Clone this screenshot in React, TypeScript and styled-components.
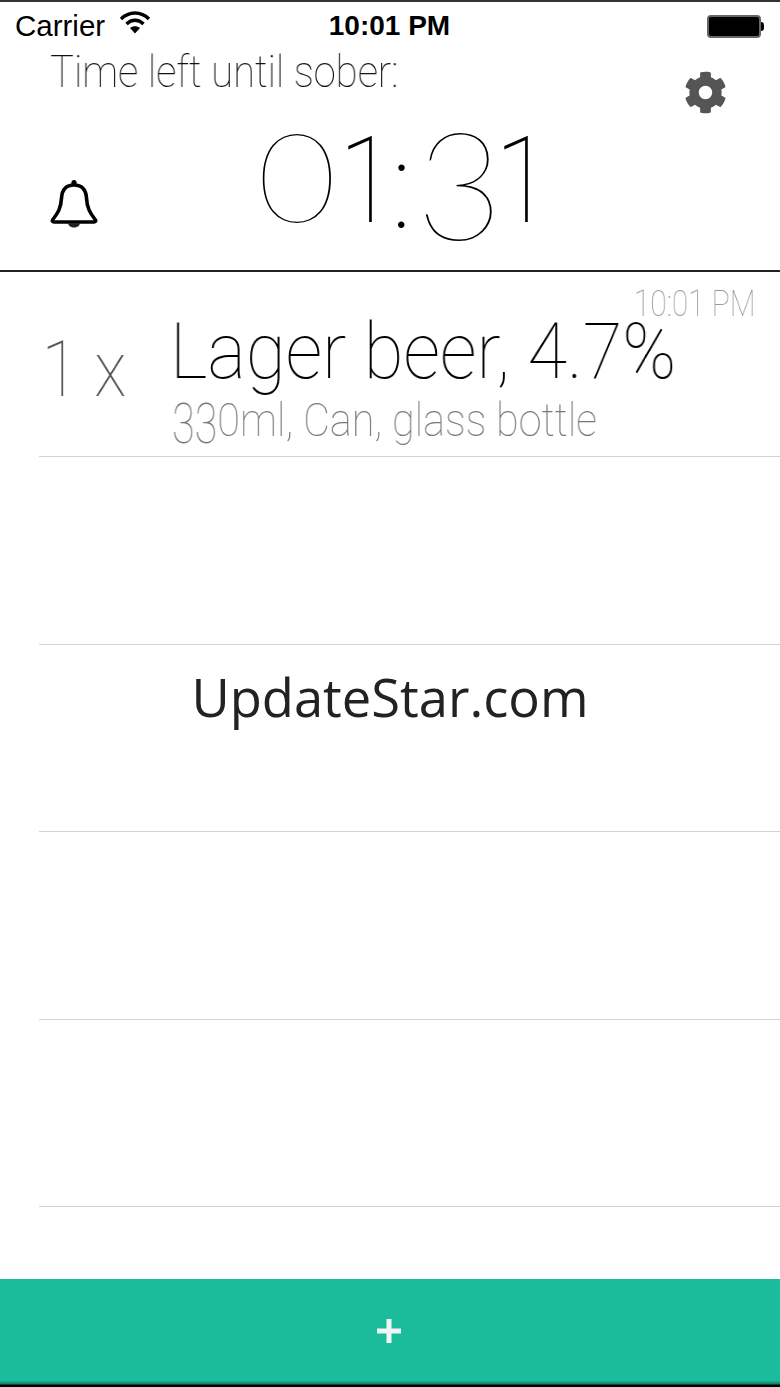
import styled, { createGlobalStyle } from 'styled-components';
import { FaCog } from 'react-icons/fa';

const GlobalStyle = createGlobalStyle`
  html, body {
    margin: 0;
    padding: 0;
    background: #fff;
  }
`;

const App = () => {
  return (
    <>
      <GlobalStyle />
      <StyledPage>
        <StyledStatusBar>
          <StyledCarrier>
            Carrier
            <svg width="32" height="24" viewBox="0 0 32 24">
              <path d="M2 9 C10 1 22 1 30 9" fill="none" stroke="#000" strokeWidth="3.4" />
              <path d="M7.5 14 C12.5 9 19.5 9 24.5 14" fill="none" stroke="#000" strokeWidth="3.4" />
              <path d="M11 18 L16 23.5 L21 18 C18 15.5 14 15.5 11 18 Z" fill="#000" />
            </svg>
          </StyledCarrier>
          <StyledClock>10:01 PM</StyledClock>
          <StyledBattery>
            <StyledBatteryBody />
            <StyledBatteryTip />
          </StyledBattery>
        </StyledStatusBar>

        <StyledSummary>
          <StyledTitleRow>
            <StyledTitle>Time left until sober:</StyledTitle>
            <StyledGear>
              <FaCog size={43} />
            </StyledGear>
          </StyledTitleRow>
          <StyledTimerRow>
            <svg width="48" height="50" viewBox="0 0 48 50">
              <path
                d="M24 6 C15 6 12 12 11.5 19 C11 29 8 34 2.5 41 C2 42 2.5 43 4 43 L44 43 C45.5 43 46 42 45.5 41 C40 34 37 29 36.500 19 C36 12 33 6 24 6 Z"
                fill="none"
                stroke="#000"
                strokeWidth="3.6"
                strokeLinejoin="round"
              />
              <circle cx="24" cy="3.500" r="2.600" fill="#000" />
              <path d="M18 44 C18.500 50 29.500 50 30 44 Z" fill="#222" />
            </svg>
            <StyledTimer>
              <StyledZero>0</StyledZero>
              <StyledOne $width={49}>1</StyledOne>
              <StyledColon>:</StyledColon>
              <StyledTimerThree>3</StyledTimerThree>
              <StyledOne $width={40}>1</StyledOne>
            </StyledTimer>
          </StyledTimerRow>
        </StyledSummary>

        <StyledList>
          <StyledRow>
            <StyledQuantity>1 x</StyledQuantity>
            <StyledDrink>
              <StyledStamp>10:01 PM</StyledStamp>
              <StyledName>Lager beer, 4.7%</StyledName>
              <StyledDetail>
                <StyledDropThree>3</StyledDropThree>
                <StyledDropThree>3</StyledDropThree>0ml, Can, glass bottle
              </StyledDetail>
            </StyledDrink>
          </StyledRow>
          <StyledRow />
          <StyledRow />
          <StyledRow />
          <StyledRow />
          <StyledRow />
        </StyledList>

        <StyledWatermark>UpdateStar.com</StyledWatermark>

        <StyledAddBar>
          <svg width="24" height="24" viewBox="0 0 24 24">
            <path d="M9.500 0 H14.500 V9.500 H24 V14.500 H14.500 V24 H9.500 V14.500 H0 V9.500 H9.500 Z" fill="#f1f5f7" />
          </svg>
        </StyledAddBar>
      </StyledPage>
    </>
  );
};

const thinFont = `Roboto, "Liberation Sans", sans-serif`;
const hairlineFont = `Lato, Roboto, sans-serif`;

const StyledPage = styled.div`
  position: relative;
  display: flex;
  flex-direction: column;
  width: 780px;
  height: 1387px;
  overflow: hidden;
  background-color: #fff;
  border-top: 2px solid #333;
  box-sizing: border-box;
`;

const StyledStatusBar = styled.div`
  display: grid;
  grid-template-columns: 1fr auto 1fr;
  align-items: center;
  height: 48px;
  padding: 0 16px 0 15px;
  flex-shrink: 0;
  font-family: 'Liberation Sans', Arial, sans-serif;
  color: #000;
`;

const StyledCarrier = styled.div`
  display: flex;
  align-items: center;
  gap: 14px;
  font-size: 29.500px;

  svg {
    margin-bottom: 8px;
  }
`;

const StyledClock = styled.div`
  font-size: 28px;
  font-weight: bold;
`;

const StyledBattery = styled.div`
  display: flex;
  align-items: center;
  justify-content: flex-end;
`;

const StyledBatteryBody = styled.div`
  width: 50px;
  height: 19px;
  background-color: #000;
  border: 2px solid #666;
  border-radius: 4px;
`;

const StyledBatteryTip = styled.div`
  width: 3px;
  height: 9px;
  background-color: #000;
  border-radius: 0 3px 3px 0;
`;

const StyledSummary = styled.div`
  height: 220px;
  flex-shrink: 0;
  border-bottom: 2px solid #222;
`;

const StyledTitleRow = styled.div`
  display: flex;
  justify-content: space-between;
  align-items: flex-start;
  height: 78px;
  padding: 0 53px 0 50px;
`;

const StyledTitle = styled.div`
  font-family: ${thinFont};
  font-weight: 100;
  font-size: 45px;
  line-height: 44px;
  color: #111;
  white-space: nowrap;
  will-change: transform;
  transform: scaleX(0.89);
  transform-origin: left center;
`;

const StyledGear = styled.div`
  margin-top: 21px;
  height: 43px;
  color: #555;
`;

const StyledTimerRow = styled.div`
  display: flex;
  align-items: flex-end;
  height: 103px;
  padding-left: 50px;
  gap: 159px;

  svg {
    flex-shrink: 0;
    margin-bottom: 2px;
  }
`;

const StyledTimer = styled.div`
  display: flex;
  align-items: baseline;
  font-family: ${hairlineFont};
  font-weight: 100;
  font-size: 125px;
  line-height: 100px;
  color: #000;
  will-change: transform;
`;

const StyledZero = styled.span`
  width: 82px;
  transform: scaleX(1.1);
  transform-origin: left center;
`;

const StyledOne = styled.span<{ $width: number }>`
  width: ${({ $width }) => $width}px;
  font-family: ${thinFont};
  font-size: 120px;
  transform: scaleX(0.85);
  transform-origin: left center;
`;

const StyledColon = styled.span`
  width: 25px;
  padding-left: 3px;
  font-family: ${thinFont};
  font-size: 120px;
  transform: translateY(6px);
`;

const StyledTimerThree = styled.span`
  width: 79px;
  transform: scale(1.2, 1.2);
  transform-origin: left 8%;
`;

const StyledDropThree = styled.span`
  display: inline-block;
  transform: scaleY(1.2);
  transform-origin: center 10%;
`;

const StyledList = styled.div`
  flex: 1;
  overflow: hidden;
`;

const StyledRow = styled.div`
  display: flex;
  height: 187.500px;
  margin-left: 39px;
  border-bottom: 1px solid #d4d4d4;
  box-sizing: border-box;

  &:first-child {
    height: 185px;
  }
`;

const StyledQuantity = styled.div`
  width: 133px;
  padding: 53px 0 0 3px;
  box-sizing: border-box;
  font-family: ${thinFont};
  font-weight: 100;
  font-size: 78px;
  line-height: 90px;
  color: #555;
  white-space: nowrap;
  will-change: transform;
  transform: scaleX(0.86);
  transform-origin: left center;
`;

const StyledDrink = styled.div`
  flex: 1;
  display: flex;
  flex-direction: column;
  min-width: 0;
`;

const StyledStamp = styled.div`
  align-self: flex-end;
  margin: 16px 25px 0 0;
  font-family: ${thinFont};
  font-weight: 100;
  font-size: 36px;
  line-height: 32px;
  color: #999;
  will-change: transform;
  transform: scaleX(0.83);
  transform-origin: right center;
`;

const StyledName = styled.div`
  font-family: ${thinFont};
  font-weight: 100;
  font-size: 78px;
  line-height: 60px;
  margin: 2px 0 0 -2px;
  color: #000;
  white-space: nowrap;
  will-change: transform;
  transform: scaleX(0.93);
  transform-origin: left center;
`;

const StyledDetail = styled.div`
  font-family: ${thinFont};
  font-weight: 100;
  font-size: 47px;
  line-height: 48px;
  margin-top: 14px;
  color: #777;
  white-space: nowrap;
  will-change: transform;
  transform: scaleX(0.88);
  transform-origin: left center;
`;

const StyledWatermark = styled.div`
  position: absolute;
  top: 660px;
  left: 0;
  right: 0;
  text-align: center;
  font-family: 'Open Sans', sans-serif;
  font-size: 52.500px;
  line-height: 70px;
  color: #222;
`;

const StyledAddBar = styled.div`
  display: flex;
  align-items: center;
  justify-content: center;
  flex-shrink: 0;
  height: 108px;
  padding-bottom: 4px;
  padding-right: 3px;
  box-sizing: border-box;
  background: linear-gradient(#1bbc9b 0, #1bbc9b 94%, #14806b 97%, #000 98.500%);
`;

export default App;
